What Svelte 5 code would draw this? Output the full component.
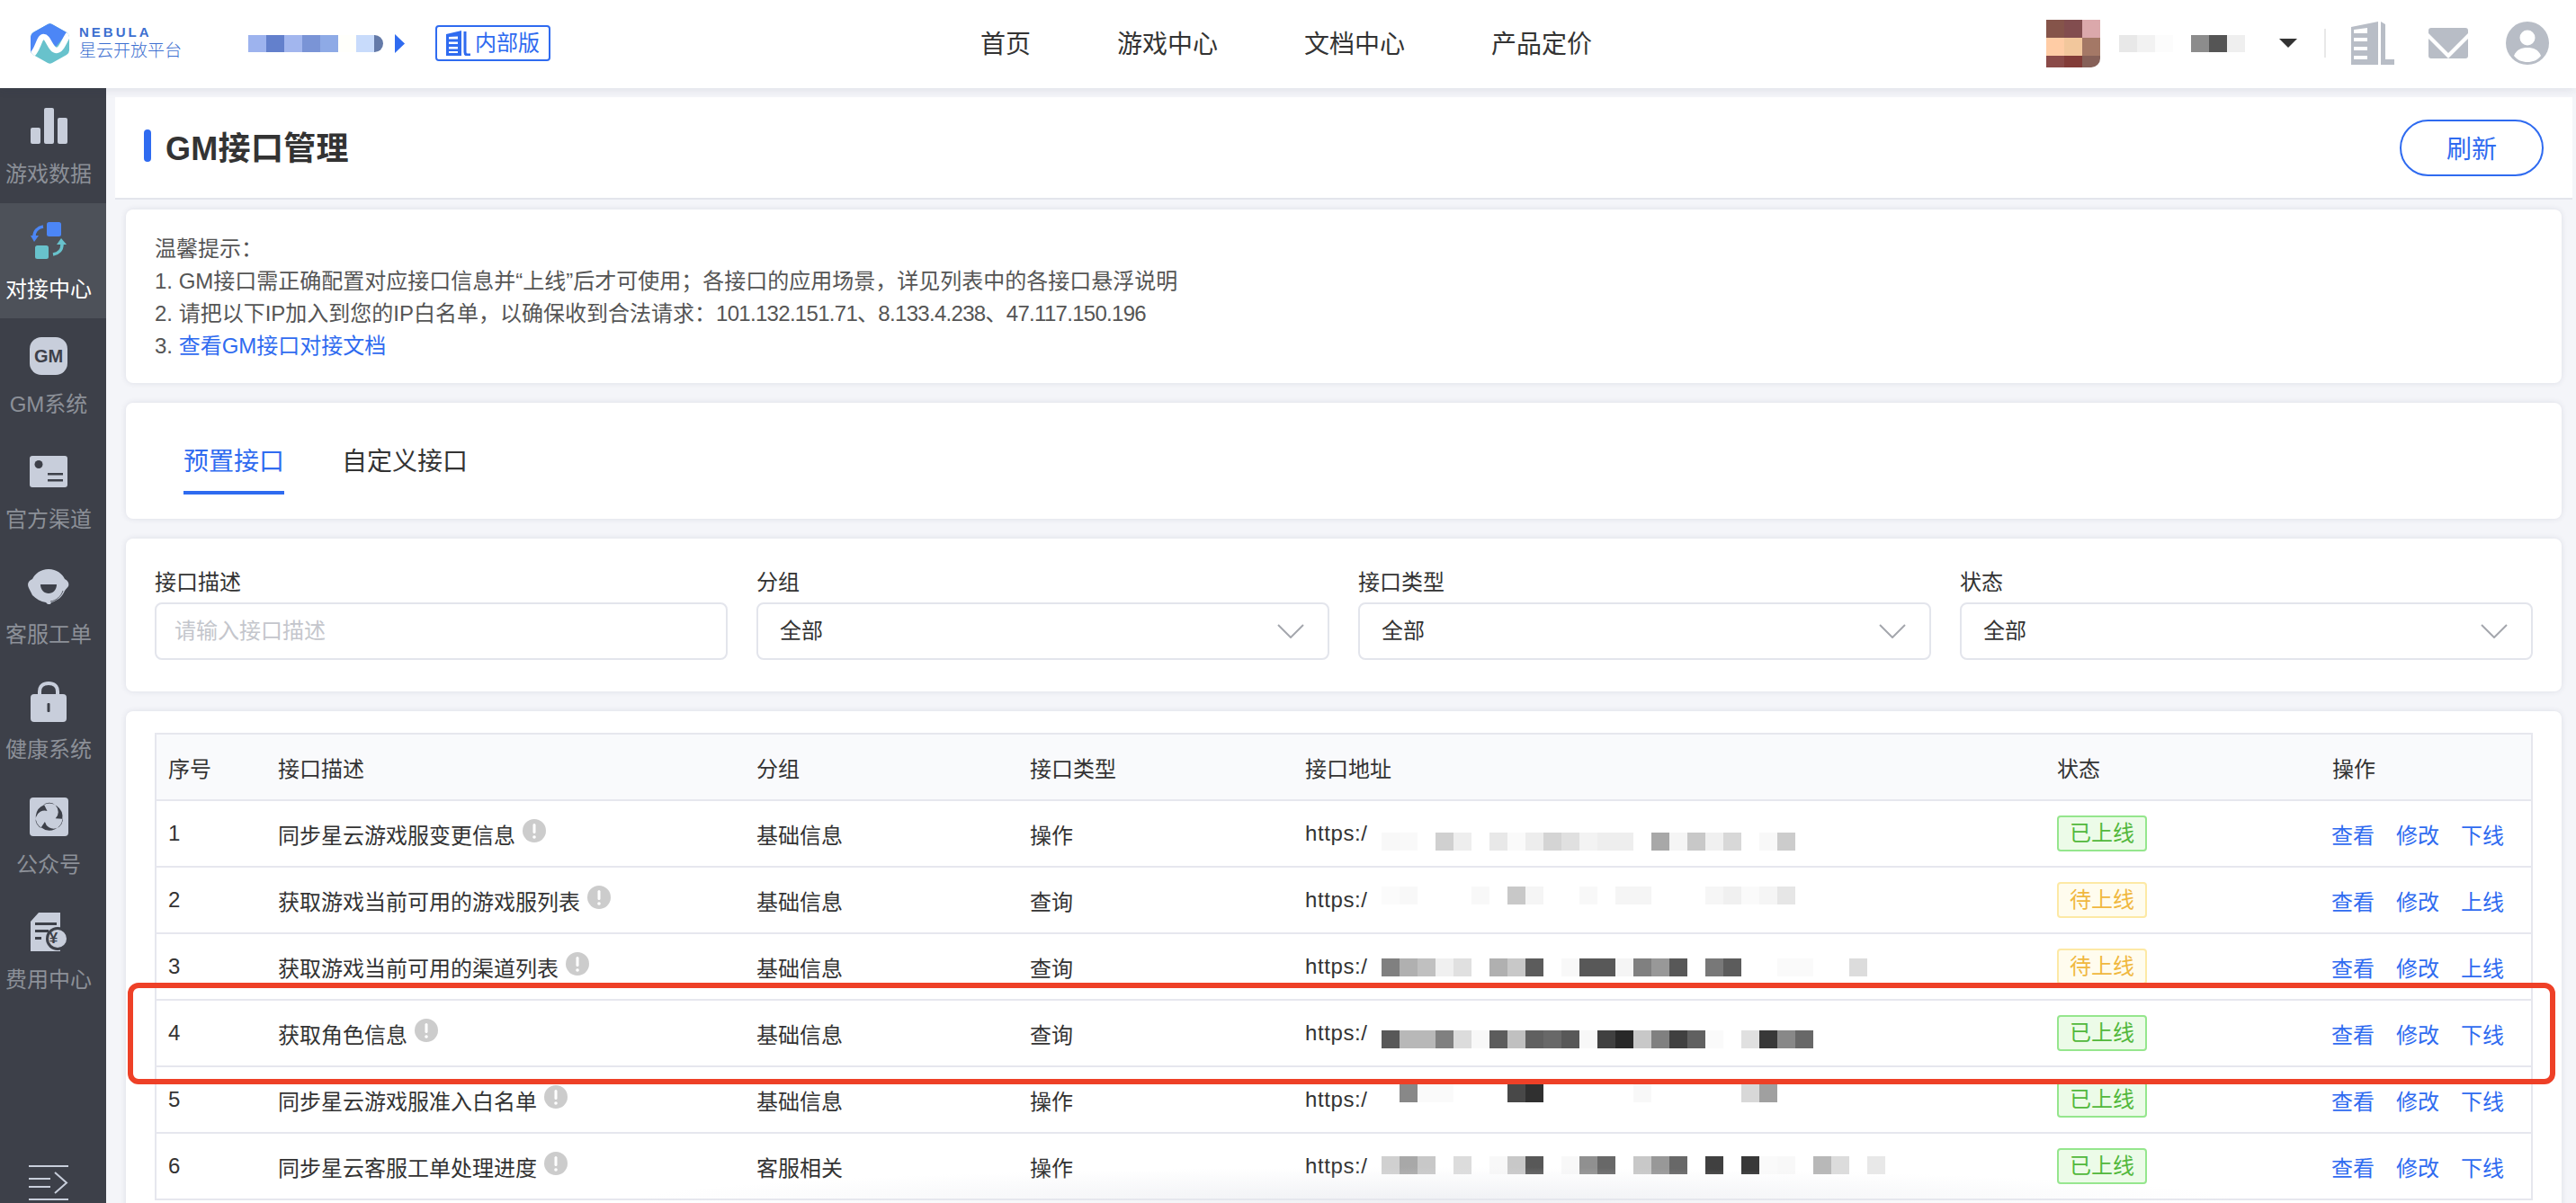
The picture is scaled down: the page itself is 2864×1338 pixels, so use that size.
<script>
  const nav = ['首页', '游戏中心', '文档中心', '产品定价'];
  const brandCells = ['#9db3ee', '#6380cc', '#a2b6ee', '#7a94d6', '#8eaae6', '#fffffb', '#c8dbfb', '#647aa8'];
  const avatarCells = ['#85544a', '#824d4f', '#dba8ab', '#ffcca5', '#f2c79c', '#a47866', '#8a4a48', '#823c38', '#866058'];
  const nameCells = ['#e8e8e8', '#f2f2f2', '#fcfcfc', '#ffffff', '#8c8c8c', '#555555', '#efefef'];
  const filters = [
    { label: '分组', value: '全部' },
    { label: '接口类型', value: '全部' },
    { label: '状态', value: '全部' },
  ];

  const rows = [
    {
      name: '同步星云游戏服变更信息', group: '基础信息', type: '操作', online: true, top: 35,
      url: 'f8 f9 ff d0 ee ff e8 fa ed d4 e0 f3 ee ee ff a8 f5 c8 f0 d8 ff f8 cc',
    },
    {
      name: '获取游戏当前可用的游戏服列表', group: '基础信息', type: '查询', online: false, top: 21,
      url: 'fb f8 ff ff ff f8 ff c8 f5 ff ff f8 ff f5 f5 ff ff ff f6 f0 fa f5 e6',
    },
    {
      name: '获取游戏当前可用的渠道列表', group: '基础信息', type: '查询', online: false, top: 27,
      url: '80 b0 c0 f0 e0 ff b0 c8 5c ff f8 58 58 f5 80 98 58 ff 78 5c ff ff fa fa ff ff dc',
    },
    {
      name: '获取角色信息', group: '基础信息', type: '查询', online: true, top: 33,
      url: '58 b8 b8 80 dc f8 5c c0 60 68 58 f8 40 28 c8 80 40 60 fa ff e0 38 88 68',
    },
    {
      name: '同步星云游戏服准入白名单', group: '基础信息', type: '操作', online: true, top: 19,
      url: 'ff 88 fa fa ff ff ff 48 30 ff ff ff ff ff f8 ff ff ff ff ff d8 a0',
    },
    {
      name: '同步星云客服工单处理进度', group: '客服相关', type: '操作', online: true, top: 25,
      url: 'd0 a8 c8 ff dc ff f8 c8 58 ff f8 90 68 ff c8 98 68 ff 40 ff 38 fa f8 ff b8 dc ff e8',
    },
  ];

  const grey = (v) => `#${v}${v}${v}`;
</script>

<div class="app">
  <header class="topbar">
    <div class="left">
      <svg class="logo" viewBox="0 0 43 45" width="43" height="45">
        <defs>
          <clipPath id="hex"><path d="M19 1 3 10Q0 12 0 15V30Q0 33 3 35L19 44Q21.500 45.500 24 44L40 35Q43 33 43 30V15Q43 12 40 10L24 1Q21.500-.5 19 1Z" /></clipPath>
        </defs>
        <g clip-path="url(#hex)">
          <rect width="43" height="45" fill="#68c2cc" />
          <path d="M0 36V0H43V8L28 26 14 12Z" fill="#4c86f6" />
          <path d="M0 36C8 32 9 15 14.500 15C20 15 22 30 29 30C35 30 38 16 44 10" fill="none" stroke="#fff" stroke-width="6.500" />
        </g>
      </svg>
      <div class="brand">
        <span class="brand-en">NEBULA</span>
        <span class="brand-cn">星云开放平台</span>
      </div>
      <div class="crumb">
        {#each brandCells as c}<i style:background={c}></i>{/each}
      </div>
      <svg class="crumb-arrow" viewBox="0 0 11 21" width="11" height="21"><path d="M0 0 11 10.500 0 21Z" fill="#2f6bf0" /></svg>
      <div class="badge">
        <svg viewBox="0 0 27 28" width="27" height="28">
          <path d="M0 4 17 0V28H0ZM3 7V9.500H13V6.500ZM3 12.500V15H13V12.500ZM3 18V20.500H13V18ZM3 23V25H13V23Z" fill="#2f6bf0" fill-rule="evenodd" />
          <path d="M21 1V24Q21 27 24 27H27" fill="none" stroke="#2f6bf0" stroke-width="3" />
        </svg>
        内部版
      </div>
    </div>

    <nav class="nav">
      {#each nav as item}<a href="#top">{item}</a>{/each}
    </nav>

    <div class="right">
      <div class="avatar">
        {#each avatarCells as c}<i style:background={c}></i>{/each}
      </div>
      <div class="user-name">
        {#each nameCells as c}<i style:background={c}></i>{/each}
      </div>
      <span class="caret"></span>
      <span class="divider"></span>
      <svg class="top-icon" viewBox="0 0 48 48" width="48" height="48">
        <path d="M0 6 30 0V48H0ZM3 9V13H18V7ZM3 18V22H18V18ZM3 28V32H18V28ZM3 38V42H18V38Z" fill="#b8bdc6" fill-rule="evenodd" />
        <path d="M33 0 38 3V42H48V48H33Z" fill="#b8bdc6" />
      </svg>
      <svg class="top-icon mail" viewBox="0 0 44 34" width="44" height="34">
        <path d="M3 0H41Q44 0 44 3V6L22 28 0 6V3Q0 0 3 0Z" fill="#b8bdc6" />
        <path d="M0 12 22 34 44 12V31Q44 34 41 34H3Q0 34 0 31Z" fill="#b8bdc6" />
      </svg>
      <svg class="top-icon user" viewBox="0 0 48 48" width="48" height="48">
        <circle cx="24" cy="24" r="24" fill="#b8bdc6" />
        <circle cx="24" cy="18" r="8.500" fill="#fff" />
        <path d="M9 38C12 31 17 29 24 29S36 31 39 38C35 43 30 45 24 45S13 43 9 38Z" fill="#fff" />
      </svg>
    </div>
  </header>

  <div class="body">
    <aside class="sidebar">
      <a class="side-item" href="#top">
        <span class="side-icon">
          <svg viewBox="0 0 41 40" width="41" height="40" fill="#c8cedb">
            <rect y="22" width="11" height="18" rx="2" />
            <rect x="15" width="11" height="40" rx="2" />
            <rect x="30" y="11" width="11" height="29" rx="2" />
          </svg>
        </span>
        游戏数据
      </a>
      <a class="side-item active" href="#top">
        <span class="side-icon">
          <svg viewBox="0 0 40 42" width="40" height="42">
            <rect x="18" width="16" height="16" rx="2.500" fill="#4c86f6" />
            <rect x="5" y="26" width="15" height="15" rx="2.500" fill="#68c2cc" />
            <path d="M14 5C8 6 4 10 4 16" fill="none" stroke="#4c86f6" stroke-width="3.500" />
            <path d="M0 15H9L4 22Z" fill="#4c86f6" />
            <path d="M25 36C31 35 35 31 35 25" fill="none" stroke="#68c2cc" stroke-width="3.500" />
            <path d="M29 25H40L34 18Z" fill="#68c2cc" />
          </svg>
        </span>
        对接中心
      </a>
      <a class="side-item" href="#top">
        <span class="side-icon"><span class="gm">GM</span></span>
        GM系统
      </a>
      <a class="side-item" href="#top">
        <span class="side-icon">
          <svg viewBox="0 0 42 35" width="42" height="35">
            <rect width="42" height="35" rx="3" fill="#c8cedb" />
            <circle cx="10" cy="9.500" r="4.500" fill="#3d4049" />
            <rect x="20" y="19" width="17" height="2.500" fill="#3d4049" />
            <rect x="20" y="26" width="17" height="2.500" fill="#3d4049" />
          </svg>
        </span>
        官方渠道
      </a>
      <a class="side-item" href="#top">
        <span class="side-icon">
          <svg viewBox="0 0 46 39" width="46" height="39">
            <path d="M23 0C32 0 38 5 41 11C45 13 46 16 45 19C44 21 42 22 41 24C38 31 33 35 26 37L25 39H22L20 37C14 36 9 33 5 29C3 25 2 23 1 21C-1 17 0 13 5 11C8 5 14 0 23 0Z" fill="#c8cedb" />
            <path d="M14 17H32C32 23 28 27 23 27S14 23 14 17Z" fill="#3d4049" />
            <path d="M25 36C32 35 37 30 39 24" fill="none" stroke="#3d4049" stroke-width=".8" />
          </svg>
        </span>
        客服工单
      </a>
      <a class="side-item" href="#top">
        <span class="side-icon">
          <svg viewBox="0 0 40 45" width="40" height="45">
            <path d="M10 16V11C10 5 14 2 20 2S30 5 30 11V16" fill="none" stroke="#c8cedb" stroke-width="4" />
            <rect y="14" width="40" height="31" rx="4" fill="#c8cedb" />
            <rect x="18.500" y="24" width="3" height="10" rx="1" fill="#3d4049" />
          </svg>
        </span>
        健康系统
      </a>
      <a class="side-item" href="#top">
        <span class="side-icon">
          <svg viewBox="0 0 43 43" width="43" height="43">
            <rect width="43" height="43" rx="4" fill="#c8cedb" />
            <g transform="translate(21.700 21.700)" fill="#3d4049">
              <path d="M-7-13A14.500 14.500 0 0 1 14.500 2L7 1.500A6.500 6.500 0 0 0-7-13Z" />
              <path transform="rotate(120)" d="M-7-13A14.500 14.500 0 0 1 14.500 2L7 1.500A6.500 6.500 0 0 0-7-13Z" />
              <path transform="rotate(240)" d="M-7-13A14.500 14.500 0 0 1 14.500 2L7 1.500A6.500 6.500 0 0 0-7-13Z" />
            </g>
          </svg>
        </span>
        公众号
      </a>
      <a class="side-item" href="#top">
        <span class="side-icon">
          <span class="bill">
            <svg viewBox="0 0 41 43" width="41" height="43">
              <path d="M9 0H33V43H0V10Z" fill="#c8cedb" />
              <rect x="5" y="11" width="24" height="3" fill="#3d4049" />
              <rect x="5" y="19" width="15" height="3" fill="#3d4049" />
              <rect x="5" y="27" width="7" height="3" fill="#3d4049" />
              <circle cx="30" cy="29" r="13" fill="#3d4049" />
              <circle cx="30" cy="29" r="10" fill="#c8cedb" />
            </svg>
            <b>¥</b>
          </span>
        </span>
        费用中心
      </a>
      <svg class="fold" viewBox="0 0 44 39" width="44" height="39" fill="none" stroke="#c8cedb" stroke-width="2">
        <path d="M0 1H44M0 15H24M0 24H24M0 38H44M29 8 42 19.500 29 31" />
      </svg>
    </aside>

    <main class="main">
      <div class="page-head">
        <h1>GM接口管理</h1>
        <button class="refresh">刷新</button>
      </div>

      <div class="content">
        <section class="card notice">
          <p>温馨提示：</p>
          <p>1. GM接口需正确配置对应接口信息并“上线”后才可使用；各接口的应用场景，详见列表中的各接口悬浮说明</p>
          <p>2. 请把以下IP加入到您的IP白名单，以确保收到合法请求：<span class="ips">101.132.151.71、8.133.4.238、47.117.150.196</span></p>
          <p>3. <a href="#top">查看GM接口对接文档</a></p>
        </section>

        <section class="card tabs">
          <span class="tab on">预置接口</span>
          <span class="tab">自定义接口</span>
        </section>

        <section class="card filters">
          <label class="field">
            <span>接口描述</span>
            <span class="control placeholder">请输入接口描述</span>
          </label>
          {#each filters as f}
            <div class="field">
              <span>{f.label}</span>
              <span class="control select">
                {f.value}
                <svg viewBox="0 0 30 16" width="30" height="16" fill="none" stroke="#a4a7ad" stroke-width="2"><path d="M1 1 15 15 29 1" /></svg>
              </span>
            </div>
          {/each}
        </section>

        <section class="card list">
          <table>
            <colgroup>
              <col style="width:120px" />
              <col style="width:532px" />
              <col style="width:304px" />
              <col style="width:306px" />
              <col style="width:836px" />
              <col style="width:306px" />
              <col />
            </colgroup>
            <thead>
              <tr>
                <th>序号</th><th>接口描述</th><th>分组</th><th>接口类型</th><th>接口地址</th><th>状态</th><th>操作</th>
              </tr>
            </thead>
            <tbody>
              {#each rows as row, i}
                <tr>
                  <td>{i + 1}</td>
                  <td>
                    <span class="desc">
                      {row.name}
                      <svg class="info" viewBox="0 0 26 26" width="26" height="26">
                        <circle cx="13" cy="13" r="13" fill="#cccccc" />
                        <rect x="11.500" y="5" width="3" height="11" rx="1.500" fill="#fff" />
                        <circle cx="13" cy="20" r="1.800" fill="#fff" />
                      </svg>
                    </span>
                  </td>
                  <td>{row.group}</td>
                  <td>{row.type}</td>
                  <td>
                    <div class="url">
                      https:/
                      <div class="mosaic" style:top="{row.top}px">
                        {#each row.url.split(' ') as v}<i style:background={grey(v)}></i>{/each}
                      </div>
                    </div>
                  </td>
                  <td><span class="tag" class:wait={!row.online}>{row.online ? '已上线' : '待上线'}</span></td>
                  <td class="ops">
                    <a href="#top">查看</a><a href="#top">修改</a><a href="#top">{row.online ? '下线' : '上线'}</a>
                  </td>
                </tr>
              {/each}
            </tbody>
          </table>
        </section>
      </div>
    </main>
  </div>

  <div class="mark"></div>
  <div class="fade"></div>
</div>

<style>
  :global(body) {
    margin: 0;
    background: #f4f5f9;
  }

  .app {
    position: relative;
    height: 1338px;
    overflow: hidden;
    font-family: "Liberation Sans", "Noto Sans CJK SC", sans-serif;
    font-size: 24px;
    color: #333;
    background: #f4f5f9;
  }

  a {
    text-decoration: none;
    color: inherit;
  }

  i {
    display: block;
  }

  /* top bar */
  .topbar {
    position: relative;
    z-index: 2;
    display: grid;
    grid-template-columns: 1fr auto 1fr;
    align-items: center;
    height: 98px;
    padding: 0 4px 2px 0;
    box-sizing: border-box;
    background: #fff;
    box-shadow: 0 2px 10px rgba(40, 50, 80, 0.1);
  }

  .left {
    display: flex;
    align-items: center;
    padding-left: 34px;
  }

  .logo {
    flex: none;
  }

  .brand {
    display: flex;
    flex-direction: column;
    margin-left: 11px;
    color: #3d6fd0;
  }

  .brand-en {
    font-size: 15px;
    font-weight: 700;
    line-height: 17px;
    letter-spacing: 3px;
  }

  .brand-cn {
    font-size: 19px;
    line-height: 25px;
    font-weight: 300;
  }

  .crumb {
    display: flex;
    margin-left: 74px;
    overflow: hidden;
    border-radius: 0 10px 10px 0;
  }

  .crumb i {
    width: 20px;
    height: 19px;
  }

  .crumb i:last-child {
    width: 10px;
  }

  .crumb-arrow {
    margin-left: 13px;
  }

  .badge {
    display: flex;
    align-items: center;
    gap: 5px;
    height: 40px;
    margin-left: 34px;
    padding: 0 10px;
    box-sizing: border-box;
    border: 2px solid #2f6bf0;
    border-radius: 4px;
    color: #2f6bf0;
    line-height: 1;
  }

  .nav {
    display: flex;
    gap: 96px;
    margin-top: -2px;
    font-size: 28px;
  }

  .right {
    display: flex;
    align-items: center;
    justify-content: flex-end;
    padding-right: 26px;
  }

  .avatar {
    display: grid;
    grid-template-columns: repeat(3, 20px);
    grid-template-rows: 20px 20px 13px;
    overflow: hidden;
    border-radius: 0 0 10px 0;
  }

  .user-name {
    display: flex;
    margin-left: 21px;
  }

  .user-name i {
    width: 20px;
    height: 19px;
  }

  .caret {
    width: 0;
    height: 0;
    margin-left: 38px;
    border-style: solid;
    border-width: 10px 10px 0;
    border-color: #333 transparent transparent;
  }

  .divider {
    width: 2px;
    height: 32px;
    margin-left: 30px;
    background: #e8e8e8;
  }

  .top-icon {
    margin-left: 28px;
  }

  .top-icon.mail {
    margin-left: 38px;
  }

  .top-icon.user {
    margin-left: 42px;
  }

  /* sidebar */
  .body {
    display: flex;
    height: 1240px;
  }

  .sidebar {
    flex: none;
    display: flex;
    flex-direction: column;
    width: 118px;
    background: #3d4049;
  }

  .side-item {
    display: flex;
    flex-direction: column;
    align-items: center;
    height: 128px;
    padding: 20px 10px 0 0;
    box-sizing: border-box;
    color: #8c9098;
    line-height: 32px;
  }

  .side-item.active {
    background: #4d5159;
    color: #fff;
  }

  .side-icon {
    display: flex;
    align-items: center;
    justify-content: center;
    height: 44px;
    margin-bottom: 16px;
  }

  .gm {
    display: flex;
    align-items: center;
    justify-content: center;
    width: 42px;
    height: 42px;
    border-radius: 13px;
    background: #c8cedb;
    color: #3d4049;
    font-size: 20px;
    font-weight: 700;
  }

  .bill {
    position: relative;
    display: flex;
  }

  .bill b {
    position: absolute;
    right: 5px;
    bottom: 3px;
    width: 20px;
    color: #3d4049;
    font-size: 17px;
    line-height: 22px;
    text-align: center;
  }

  .fold {
    margin: auto 0 3px 32px;
  }

  /* main column */
  .main {
    flex: 1;
    min-width: 0;
    padding: 10px 4px 0 10px;
  }

  .page-head {
    display: flex;
    align-items: center;
    justify-content: space-between;
    height: 114px;
    padding: 0 32px;
    box-sizing: border-box;
    background: #fff;
    border-bottom: 2px solid #e3e5ec;
  }

  h1 {
    position: relative;
    margin: 0;
    padding: 4px 0 0 24px;
    font-size: 36px;
    font-weight: 600;
    line-height: 48px;
    letter-spacing: 0.3px;
  }

  h1::before {
    content: '';
    position: absolute;
    left: 0;
    top: 6px;
    width: 8px;
    height: 36px;
    border-radius: 4px;
    background: #2f6bf0;
  }

  .refresh {
    width: 160px;
    height: 63px;
    padding: 0;
    border: 2px solid #2f6bf0;
    border-radius: 32px;
    background: #fff;
    color: #2f6bf0;
    font: inherit;
    font-size: 28px;
  }

  .content {
    display: flex;
    flex-direction: column;
    gap: 22px;
    padding: 11px 12px 0;
  }

  .card {
    box-sizing: border-box;
    border-radius: 8px;
    background: #fff;
    box-shadow: 0 0 6px rgba(50, 60, 90, 0.12);
  }

  .notice {
    height: 193px;
    padding: 26px 32px 0;
    color: #555;
    line-height: 36px;
  }

  .notice p {
    margin: 0;
  }

  .notice a {
    color: #2f6bf0;
  }

  .ips {
    letter-spacing: -0.7px;
  }

  .tabs {
    display: flex;
    gap: 64px;
    height: 129px;
    padding: 46px 0 0 64px;
  }

  .tab {
    height: 52px;
    font-size: 28px;
    line-height: 40px;
  }

  .tab.on {
    color: #2f6bf0;
    border-bottom: 4px solid #2f6bf0;
  }

  .filters {
    display: grid;
    grid-template-columns: repeat(4, 1fr);
    gap: 32px;
    height: 170px;
    padding: 33px 32px 0 32px;
  }

  .field {
    display: flex;
    flex-direction: column;
    gap: 6px;
    line-height: 32px;
  }

  .control {
    display: flex;
    align-items: center;
    height: 64px;
    padding: 0 26px 0 24px;
    box-sizing: border-box;
    border: 2px solid #e3e5ec;
    border-radius: 8px;
  }

  .placeholder {
    padding-left: 20px;
    color: #c4c6cc;
  }

  .select {
    justify-content: space-between;
  }

  /* table */
  .list {
    height: 560px;
    padding: 24px 32px 0 32px;
  }

  table {
    width: 100%;
    table-layout: fixed;
    border-collapse: separate;
    border-spacing: 0;
    border-left: 2px solid #e6e7ee;
    border-right: 2px solid #e6e7ee;
  }

  th,
  td {
    height: 74px;
    padding: 0 0 0 13px;
    box-sizing: border-box;
    border-bottom: 2px solid #e6e7ee;
    font-weight: 400;
    text-align: left;
    white-space: nowrap;
  }

  th {
    height: 76px;
    border-top: 2px solid #e6e7ee;
    background: #f9fafc;
  }

  td:nth-child(n + 2),
  th:nth-child(n + 2) {
    padding-left: 15px;
  }

  td.ops {
    padding-left: 14px;
  }

  .desc {
    display: inline-flex;
    align-items: center;
    gap: 8px;
  }

  .info {
    margin-top: -6px;
  }

  .url {
    position: relative;
    display: flex;
    align-items: center;
    height: 72px;
    letter-spacing: 0.6px;
  }

  .mosaic {
    position: absolute;
    left: 85px;
    display: flex;
  }

  .mosaic i {
    width: 20px;
    height: 20px;
  }

  .tag {
    display: inline-flex;
    align-items: center;
    justify-content: center;
    width: 100px;
    height: 40px;
    box-sizing: border-box;
    border: 2px solid #95e68d;
    border-radius: 4px;
    background: #ecfbe8;
    color: #52b83c;
    line-height: 1;
  }

  .tag.wait {
    border-color: #fde9a5;
    background: #fffcee;
    color: #f0b83f;
  }

  .ops a {
    margin-right: 24px;
    color: #2f6bf0;
  }

  /* annotation and lower edge */
  .mark {
    position: absolute;
    left: 142px;
    top: 1093px;
    width: 2699px;
    height: 113px;
    box-sizing: border-box;
    border: 6px solid #ee4027;
    border-radius: 12px;
    pointer-events: none;
  }

  .fade {
    position: absolute;
    left: 118px;
    right: 0;
    bottom: 0;
    height: 40px;
    background: radial-gradient(ellipse 900px 40px at 1480px 100%, rgba(228, 230, 236, 0.6), transparent);
    pointer-events: none;
  }
</style>
